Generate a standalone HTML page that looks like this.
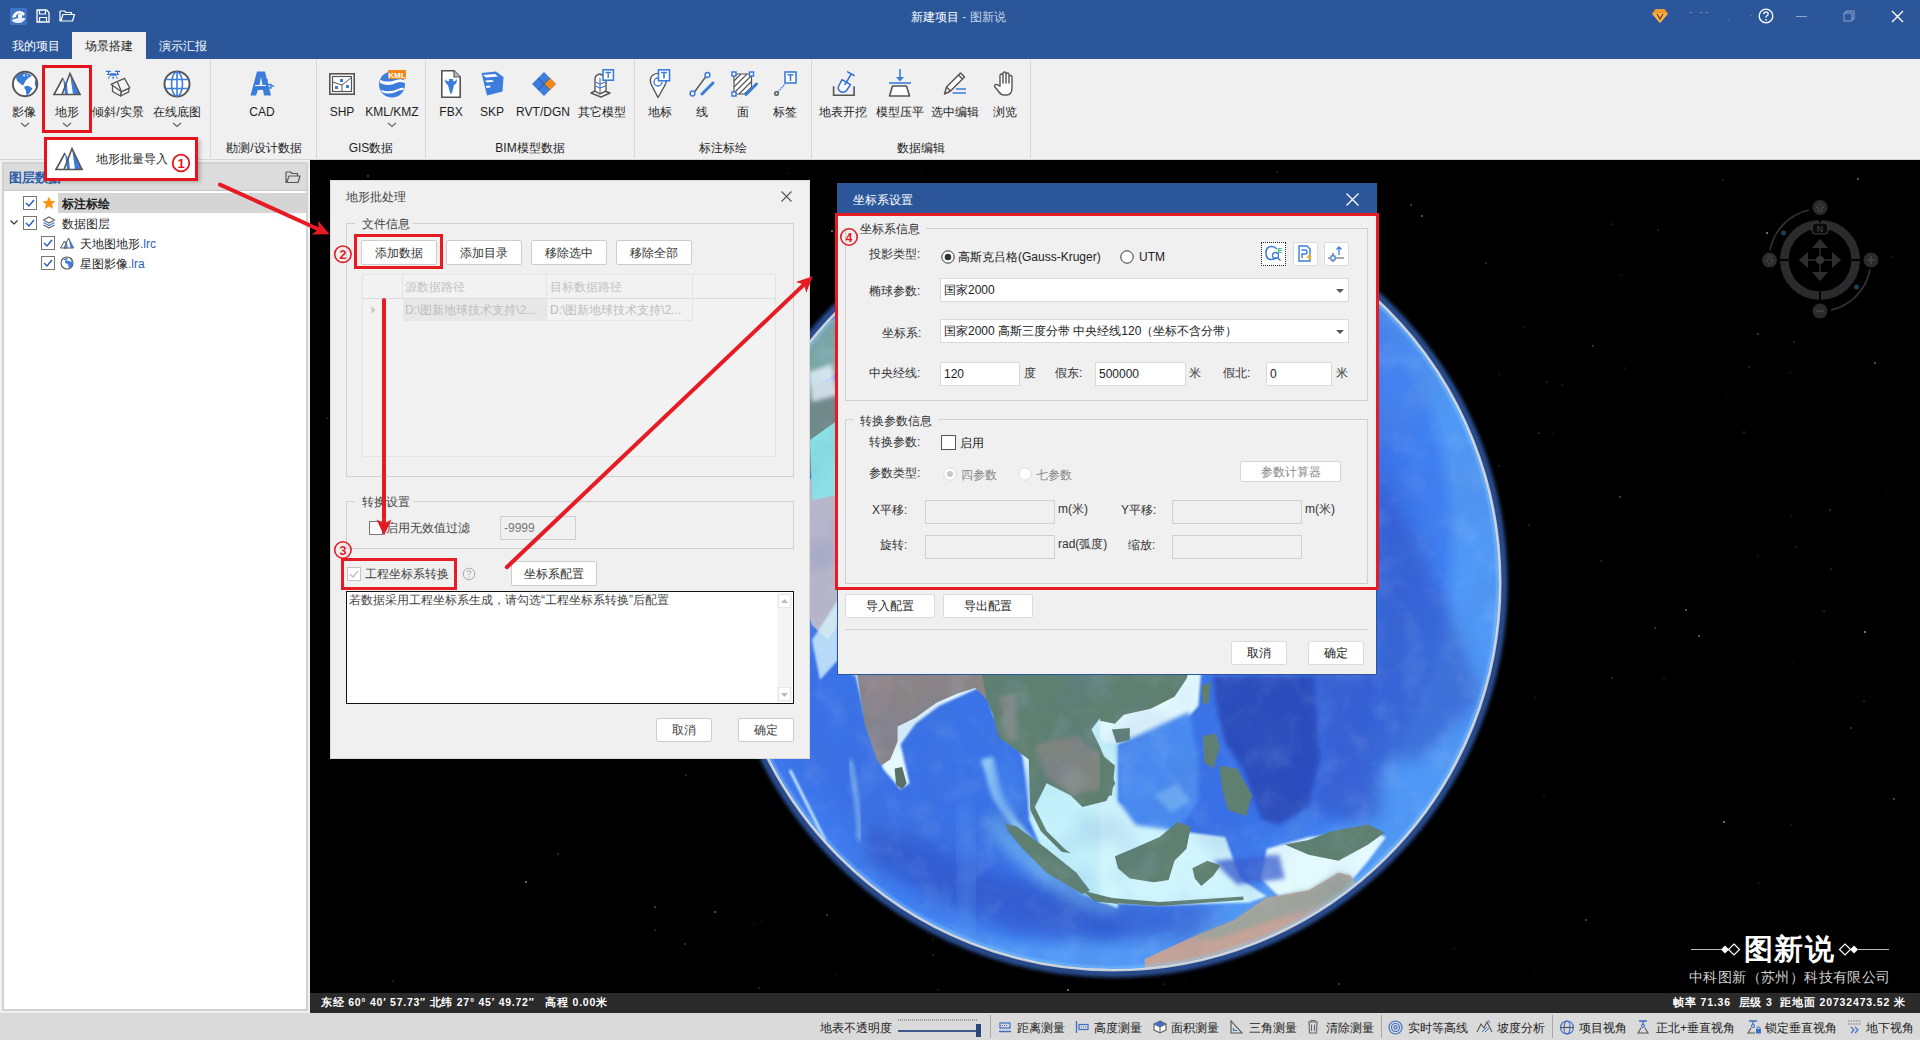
<!DOCTYPE html>
<html><head><meta charset="utf-8">
<style>
*{box-sizing:border-box}
html,body{margin:0;padding:0;width:1920px;height:1040px;overflow:hidden;background:#f0f0f0;font-family:"Liberation Sans",sans-serif;font-size:12px;color:#1e1e1e}
.a{position:absolute}
.t{position:absolute;white-space:nowrap;line-height:14px}
.c{text-align:center}
svg{position:absolute;overflow:visible}
.btn{background:#fff;border:1px solid #cdcdcd;border-radius:2px}
</style></head><body>

<!-- title bar -->
<div class="a" style="left:0;top:0;width:1920px;height:59px;background:#2b579a"></div>
<div class="t" style="left:911px;top:10px;color:#fff">新建项目 <span style="color:#c9d4e7">- 图新说</span></div>

<!-- title icons -->
<svg style="left:10px;top:8px" width="17" height="17" viewBox="0 0 17 17">
<rect x="0" y="0" width="17" height="17" rx="1.5" fill="#3f74c4"/>
<path d="M2 10 Q3 4 9 3 Q13 3 15 6 L13 8 Q12 5 9 5.5 Q6 6 6 9Z" fill="#fff"/>
<path d="M1.5 12 Q8 9 15.5 10 Q14 15 8 15 Q3 15 1.5 12Z" fill="#e8f0ff"/>
<circle cx="10" cy="8" r="2.2" fill="#fff"/>
</svg>
<svg style="left:36px;top:9px" width="14" height="14" viewBox="0 0 14 14">
<path d="M1 1 H10.5 L13 3.5 V13 H1Z" fill="none" stroke="#fff" stroke-width="1.3"/>
<path d="M3.5 1 V5 H9.5 V1 M3.5 13 V8.5 H10.5 V13" fill="none" stroke="#fff" stroke-width="1.2"/>
</svg>
<svg style="left:59px;top:9px" width="16" height="13" viewBox="0 0 16 13">
<path d="M1 2 V12 H13.5 L15.5 5.5 H4 L1.8 12 M1 2 H5.5 L7 3.5 H12.5 V5.5" fill="none" stroke="#fff" stroke-width="1.2" stroke-linejoin="round"/>
</svg>
<svg style="left:1651px;top:8px" width="18" height="16" viewBox="0 0 18 16">
<path d="M1 5.5 L4.5 1 H13.5 L17 5.5 L9 15Z" fill="#f39a2e"/>
<path d="M1 5.5 H17 L9 15Z" fill="#f7b452"/>
<path d="M6 6 L9 11 L12 6" stroke="#7a3d00" stroke-width="1.3" fill="none"/>
</svg>
<div class="a" style="left:1690px;top:12px;width:2px;height:1px;background:#7b93c0"></div>
<div class="a" style="left:1700px;top:12px;width:2px;height:1px;background:#7b93c0"></div>
<div class="a" style="left:1706px;top:12px;width:2px;height:1px;background:#7b93c0"></div>
<div class="a" style="left:1728px;top:19px;width:2px;height:1px;background:#5a78ad"></div>
<div class="a" style="left:1750px;top:15px;width:2px;height:1px;background:#5a78ad"></div>
<svg style="left:1758px;top:8px" width="16" height="16" viewBox="0 0 16 16">
<circle cx="8" cy="8" r="6.8" fill="none" stroke="#fff" stroke-width="1.3"/>
<path d="M5.8 6.2 Q5.8 3.8 8 3.8 Q10.2 3.8 10.2 6 Q10.2 7.3 8.6 8 Q8 8.4 8 9.6" fill="none" stroke="#fff" stroke-width="1.3"/>
<circle cx="8" cy="11.8" r="0.9" fill="#fff"/>
</svg>
<div class="a" style="left:1796px;top:16px;width:11px;height:1px;background:#8fa6cf"></div>
<svg style="left:1843px;top:10px" width="12" height="12" viewBox="0 0 12 12">
<path d="M3 3 V1 H11 V9 H9 M1 3 H9 V11 H1Z" fill="none" stroke="#8fa6cf" stroke-width="1"/>
</svg>
<svg style="left:1891px;top:10px" width="13" height="13" viewBox="0 0 13 13">
<path d="M1 1 L12 12 M12 1 L1 12" stroke="#fff" stroke-width="1.4"/>
</svg>

<!-- tabs -->
<div class="t" style="left:12px;top:39px;color:#fff">我的项目</div>
<div class="a" style="left:72px;top:32px;width:74px;height:28px;background:#f0f0f0"></div>
<div class="t" style="left:85px;top:39px;color:#262626">场景搭建</div>
<div class="t" style="left:159px;top:39px;color:#fff">演示汇报</div>

<!-- ribbon -->
<div class="a" style="left:0;top:159px;width:1920px;height:1px;background:#d5d5d5"></div>


<!-- ribbon icons -->
<!-- 影像 globe -->
<svg style="left:11px;top:70px" width="28" height="28" viewBox="0 0 28 28">
<circle cx="14.1" cy="14" r="12.2" fill="#fff"/>
<path d="M5 7.2 Q7 4 9.9 2.9 Q16 2 21 5.4 L16.7 8.8 L14.2 10.9 L13.6 12.8 L12.4 15.2 L9.9 14.3 L6.2 10.9Z" fill="#3a7ad8"/>
<path d="M11.5 5.2 L14 4.2 L13.5 6.8Z M15.5 4.8 L17 5.2 L16.5 7Z" fill="#fff"/>
<path d="M13.6 16.2 L17 15.8 L21.6 18.3 L18.5 23.2 L15.5 25.5 L14.8 20.2 L13.3 18Z" fill="#3a7ad8"/>
<path d="M24 10.3 L26 11 L26.2 17 L24.5 16.5 L23.8 13.5Z" fill="#3a7ad8"/>
<circle cx="14.1" cy="14" r="12.2" fill="none" stroke="#555" stroke-width="1.9"/>
</svg>
<!-- 地形 mountains -->
<svg style="left:53px;top:72px" width="29" height="24" viewBox="0 0 29 24">
<path d="M1 22.5 L10 6 L16 16 L16 22.5Z" fill="#fff"/>
<path d="M9 22.5 L17 1.5 L27 22.5Z" fill="#fff"/>
<path d="M10 6 L14 13 L15 22.5 L12 22.5Z" fill="#3c7ddc"/>
<path d="M17 1.5 L27 22.5 L20 22.5Z" fill="#3c7ddc"/>
<path d="M1 22.5 L10 6 M9 22.5 L17 1.5 L27 22.5 M0 22.5 H28" fill="none" stroke="#555" stroke-width="1.6"/>
</svg>
<!-- 倾斜 drone+house -->
<svg style="left:104px;top:70px" width="28" height="28" viewBox="0 0 28 28">
<path d="M1.9 1.4 H6.8 M11 1.4 H16 M4.5 1.4 V4.5 M13.6 1.4 V4.5 M3 4.5 H15" stroke="#2f6fd6" stroke-width="1.2" fill="none"/>
<rect x="6.2" y="3.3" width="5.8" height="2.4" fill="#2f6fd6"/>
<rect x="8.3" y="6.8" width="1.6" height="1.8" fill="#2f6fd6"/>
<path d="M4.4 8.7 Q4.8 6.5 6.4 5.8 M13.4 8.7 Q13 6.5 11.5 5.8" stroke="#2f6fd6" stroke-width="1" fill="none"/>
<path d="M8.5 15.5 L13.5 13.2 L17.5 21 L16.6 26 L8.5 21.5Z" fill="#f4f4f4" stroke="#555" stroke-width="1.3" stroke-linejoin="round"/>
<path d="M17.5 21.5 L24.8 18.5 V21.8 L16.6 26Z" fill="#f4f4f4" stroke="#555" stroke-width="1.3" stroke-linejoin="round"/>
<path d="M7 14.3 L20.5 8.4 L25.8 17.9 L17.5 21.7Z" fill="#f4f4f4" stroke="#555" stroke-width="1.3" stroke-linejoin="round"/>
<path d="M13.5 12.2 L17.5 21.7" stroke="#555" stroke-width="1.3"/>
</svg>
<!-- 在线底图 grid globe -->
<svg style="left:163px;top:70px" width="28" height="28" viewBox="0 0 28 28">
<circle cx="14" cy="14" r="12.5" fill="#fff" stroke="#555" stroke-width="2"/>
<ellipse cx="14" cy="14" rx="5.5" ry="12" fill="none" stroke="#3c7ddc" stroke-width="1.6"/>
<path d="M14 2 V26 M2.5 9.5 H25.5 M2.5 18.5 H25.5" stroke="#3c7ddc" stroke-width="1.6"/>
</svg>
<!-- CAD -->
<svg style="left:250px;top:71px" width="26" height="26" viewBox="0 0 26 26">
<path d="M7 0.5 H15 L21 24.5 H14 L13 19 H8 L6 24.5 H0.5 Z M9.5 14 H12.5 L11 6 Z" fill="#3c7ddc" fill-rule="evenodd"/>
<path d="M3.5 15 H18 M17 8 V18 M15 13.5 H21 V17 H15Z M21 15 H24" stroke="#3c7ddc" stroke-width="1.4" fill="none"/>
<path d="M5 14.5 H16" stroke="#fff" stroke-width="1" />
</svg>
<!-- SHP -->
<svg style="left:329px;top:73px" width="26" height="22" viewBox="0 0 26 22">
<rect x="0.8" y="0.8" width="24.4" height="20.4" fill="#fff" stroke="#555" stroke-width="1.6"/>
<rect x="3.5" y="3.5" width="19" height="15" fill="#fff" stroke="#555" stroke-width="1.2"/>
<path d="M3.5 9 L13 12 L22.5 4.5 M13 12 V18.5" stroke="#555" stroke-width="1" fill="none"/>
<rect x="11" y="6" width="3" height="3" fill="#3c7ddc"/><rect x="6" y="13" width="3" height="3" fill="#3c7ddc"/><rect x="17" y="12" width="3" height="3" fill="#3c7ddc"/>
</svg>
<!-- KML -->
<svg style="left:378px;top:69px" width="30" height="30" viewBox="0 0 30 30">
<circle cx="14" cy="15.5" r="13" fill="#3c7ddc"/>
<path d="M2 11 Q10 14 18 11 Q24 9 27 12 L27 14 Q22 12 18 14 Q10 18 2 14Z M3 21 Q12 24 20 20 Q24 18 26 19 L25 21 Q21 21 18 23 Q10 26 4 23Z M16 6 Q22 8 26 6 L26 8 Q21 10 16 8Z" fill="#fff"/>
<rect x="10" y="1" width="18" height="9" fill="#f08a1e"/>
<text x="19" y="8.6" font-size="8" font-weight="bold" fill="#fff" text-anchor="middle" font-family="Liberation Sans">KML</text>
</svg>
<!-- FBX -->
<svg style="left:441px;top:70px" width="20" height="28" viewBox="0 0 20 28">
<path d="M0.8 0.8 H13 L19.2 7 V27.2 H0.8 Z" fill="#fff" stroke="#555" stroke-width="1.6"/>
<path d="M13 0.8 V7 H19.2" fill="#bbb" stroke="#555" stroke-width="1.2"/>
<path d="M4 9 Q6 12 8 11 L8 9 H12 L12 11 Q14 12 16 9 Q16 14 13 15 L12 19 L11 23 L10 24 L9 23 L8 19 L7 15 Q4 14 4 9Z" fill="#3c7ddc"/>
</svg>
<!-- SKP -->
<svg style="left:481px;top:71px" width="24" height="26" viewBox="0 0 24 26">
<path d="M0.5 2 L15 0.5 L22.5 6 L21.5 20.5 L6 24.5 Z" fill="#3c7ddc"/>
<path d="M2 4 L14 3 L17 5.5 L5 6.5Z M4 9.5 L11 9 L13 10.5 L6 11.5Z M5 15 L9 14.5 L9.5 16.5 L5.5 17Z" fill="#fff"/>
</svg>
<!-- RVT -->
<svg style="left:531px;top:71px" width="26" height="26" viewBox="0 0 26 26">
<path d="M13 1 L25 13 L13 25 L1 13Z" fill="#3c7ddc"/>
<path d="M19 7 L25 13 L19 19 L13 13Z" fill="#f08a1e"/>
<path d="M7 7 L19 19 M19 7 L7 19" stroke="#2a4f8a" stroke-width="0.8"/>
</svg>
<!-- other model -->
<svg style="left:590px;top:69px" width="24" height="30" viewBox="0 0 24 30">
<path d="M1 24 L9 20 L20 24 L11 28Z" fill="#fff" stroke="#555" stroke-width="1.4" stroke-linejoin="round"/>
<path d="M5 10 Q5 6 10 5 L16 8 L16 22 L10 25 L5 22Z" fill="#fff" stroke="#555" stroke-width="1.4"/>
<path d="M10 9 V25" stroke="#555" stroke-width="1"/>
<path d="M5.5 13 L10 15 L15.5 13 M5.5 17 L10 19 L15.5 17" stroke="#3c7ddc" stroke-width="1.2" fill="none"/>
<rect x="13" y="0.8" width="10.4" height="10.4" fill="#fff" stroke="#3c7ddc" stroke-width="1.6"/>
<path d="M15.5 3.5 H21 M18.2 3.5 V9" stroke="#3c7ddc" stroke-width="1.4"/>
</svg>
<!-- 地标 -->
<svg style="left:649px;top:69px" width="24" height="30" viewBox="0 0 24 30">
<path d="M9 28.5 L2 15 Q0 9 4 6 Q7 4 10 4.5 Q16 5 17 11 Q17.5 14 15.5 17Z" fill="#fff" stroke="#555" stroke-width="1.4" stroke-linejoin="round"/>
<path d="M9 9 A4 4 0 1 0 13 13" stroke="#3c7ddc" stroke-width="1.4" fill="none"/>
<rect x="9.5" y="0.8" width="11" height="11" fill="#fff" stroke="#3c7ddc" stroke-width="1.6"/>
<path d="M12 3.5 H18 M15 3.5 V9.5" stroke="#3c7ddc" stroke-width="1.6"/>
</svg>
<!-- 线 -->
<svg style="left:689px;top:71px" width="28" height="26" viewBox="0 0 28 26">
<path d="M4 23 L18 4" stroke="#555" stroke-width="1.4"/>
<circle cx="3.5" cy="22.5" r="2.4" fill="#fff" stroke="#3c7ddc" stroke-width="1.5"/>
<circle cx="18.5" cy="4" r="2.4" fill="#fff" stroke="#3c7ddc" stroke-width="1.5"/>
<path d="M13 23 L24 12" stroke="#3c7ddc" stroke-width="3" stroke-linecap="round"/>
</svg>
<!-- 面 -->
<svg style="left:731px;top:71px" width="28" height="26" viewBox="0 0 28 26">
<path d="M3 3 H20.5 V18 L13 23 H3Z" fill="#fff" stroke="#555" stroke-width="1.2"/>
<path d="M3 10 L10 3 M3 16 L16 3 M3 22 L20.5 4.5 M8 23 L20.5 10.5 M14 23 L20.5 16" stroke="#555" stroke-width="1.2"/>
<rect x="1" y="1" width="4" height="4" fill="#fff" stroke="#3c7ddc" stroke-width="1.5"/>
<rect x="18.5" y="1" width="4" height="4" fill="#fff" stroke="#3c7ddc" stroke-width="1.5"/>
<rect x="1" y="21" width="4" height="4" fill="#fff" stroke="#3c7ddc" stroke-width="1.5"/>
<path d="M15 23.5 L25.5 13" stroke="#3c7ddc" stroke-width="3" stroke-linecap="round"/>
</svg>
<!-- 标签 -->
<svg style="left:773px;top:71px" width="26" height="26" viewBox="0 0 26 26">
<circle cx="3.5" cy="22.5" r="1.8" fill="none" stroke="#555" stroke-width="1.4"/>
<path d="M5 21 L12 13" stroke="#3c7ddc" stroke-width="1.4" stroke-dasharray="1.5 1"/>
<rect x="12" y="1" width="11" height="11" fill="#fff" stroke="#3c7ddc" stroke-width="1.6"/>
<path d="M14.5 3.8 H20.5 M17.5 3.8 V10" stroke="#3c7ddc" stroke-width="1.6"/>
</svg>
<!-- 地表开挖 -->
<svg style="left:832px;top:69px" width="24" height="30" viewBox="0 0 24 30">
<path d="M1.6 17.3 V26.3 H22.1 V17.3" stroke="#555" stroke-width="1.6" fill="none"/>
<path d="M10 10.7 L18.5 15.6 L14.5 21.5 Q12 24 9 22.8 Q5.5 21 6.5 17.5Z" fill="#fff" stroke="#2f6fd6" stroke-width="1.5" stroke-linejoin="round"/>
<path d="M13 15.5 L19.2 5.2 M15.6 2.9 L22.1 6.5" stroke="#2f6fd6" stroke-width="1.5" stroke-linecap="round"/>
</svg>
<!-- 模型压平 -->
<svg style="left:888px;top:69px" width="24" height="30" viewBox="0 0 24 30">
<path d="M12 0 V10" stroke="#3c7ddc" stroke-width="1.6"/>
<path d="M8 8 L16 8 L12 12.5Z" fill="#3c7ddc"/>
<path d="M1 14 H23" stroke="#3c7ddc" stroke-width="1.6"/>
<path d="M4.5 17 H18.5 L21.5 27 H1.5Z" fill="#fff" stroke="#555" stroke-width="1.6" stroke-linejoin="round"/>
</svg>
<!-- 选中编辑 -->
<svg style="left:943px;top:71px" width="26" height="26" viewBox="0 0 26 26">
<path d="M1.5 23 L3.5 16 L17.5 2 L21.5 6 L7.5 20 Z M15.5 4 L19.5 8 M3.5 16 L7.5 20" fill="#fff" stroke="#555" stroke-width="1.5" stroke-linejoin="round"/>
<path d="M13 18 H23 M9.5 22 H23" stroke="#3c7ddc" stroke-width="1.4"/>
</svg>
<!-- 浏览 hand -->
<svg style="left:993px;top:71px" width="24" height="26" viewBox="0 0 24 26">
<path d="M7 15 V5 Q7 3 8.5 3 Q10 3 10 5 V12 V3 Q10 1 11.5 1 Q13 1 13 3 V12 V3.5 Q13 2 14.5 2 Q16 2 16 3.5 V12 V6 Q16 4.5 17.5 4.5 Q19 4.5 19 6 V17 Q19 24 13 24 H11 Q8 24 6 21 L2 16 Q1 14.5 2.5 13.5 Q4 13 5.5 14.5 Z" fill="#fff" stroke="#555" stroke-width="1.4" stroke-linejoin="round"/>
</svg>

<!-- ribbon labels -->
<div class="t c" style="left:4px;top:105px;width:40px">影像</div>
<div class="t c" style="left:47px;top:105px;width:40px">地形</div>
<div class="t c" style="left:88px;top:105px;width:60px">倾斜/实景</div>
<div class="t c" style="left:147px;top:105px;width:60px">在线底图</div>
<div class="t c" style="left:232px;top:105px;width:60px">CAD</div>
<div class="t c" style="left:317px;top:105px;width:50px">SHP</div>
<div class="t c" style="left:362px;top:105px;width:60px">KML/KMZ</div>
<div class="t c" style="left:426px;top:105px;width:50px">FBX</div>
<div class="t c" style="left:467px;top:105px;width:50px">SKP</div>
<div class="t c" style="left:513px;top:105px;width:60px">RVT/DGN</div>
<div class="t c" style="left:572px;top:105px;width:60px">其它模型</div>
<div class="t c" style="left:635px;top:105px;width:50px">地标</div>
<div class="t c" style="left:677px;top:105px;width:50px">线</div>
<div class="t c" style="left:718px;top:105px;width:50px">面</div>
<div class="t c" style="left:760px;top:105px;width:50px">标签</div>
<div class="t c" style="left:813px;top:105px;width:60px">地表开挖</div>
<div class="t c" style="left:870px;top:105px;width:60px">模型压平</div>
<div class="t c" style="left:925px;top:105px;width:60px">选中编辑</div>
<div class="t c" style="left:980px;top:105px;width:50px">浏览</div>
<!-- chevrons -->
<svg style="left:20px;top:122px" width="10" height="6"><path d="M1 1 L5 4.5 L9 1" stroke="#666" stroke-width="1.3" fill="none"/></svg>
<svg style="left:62px;top:122px" width="10" height="6"><path d="M1 1 L5 4.5 L9 1" stroke="#666" stroke-width="1.3" fill="none"/></svg>
<svg style="left:172px;top:122px" width="10" height="6"><path d="M1 1 L5 4.5 L9 1" stroke="#666" stroke-width="1.3" fill="none"/></svg>
<svg style="left:387px;top:122px" width="10" height="6"><path d="M1 1 L5 4.5 L9 1" stroke="#666" stroke-width="1.3" fill="none"/></svg>
<!-- group labels -->
<div class="t c" style="left:212px;top:141px;width:104px">勘测/设计数据</div>
<div class="t c" style="left:317px;top:141px;width:108px">GIS数据</div>
<div class="t c" style="left:426px;top:141px;width:208px">BIM模型数据</div>
<div class="t c" style="left:635px;top:141px;width:176px">标注标绘</div>
<div class="t c" style="left:812px;top:141px;width:218px">数据编辑</div>
<!-- separators -->
<div class="a" style="left:210px;top:60px;width:1px;height:98px;background:#d6d6d6"></div>
<div class="a" style="left:316px;top:60px;width:1px;height:98px;background:#d6d6d6"></div>
<div class="a" style="left:425px;top:60px;width:1px;height:98px;background:#d6d6d6"></div>
<div class="a" style="left:634px;top:60px;width:1px;height:98px;background:#d6d6d6"></div>
<div class="a" style="left:811px;top:60px;width:1px;height:98px;background:#d6d6d6"></div>
<div class="a" style="left:1030px;top:60px;width:1px;height:98px;background:#d6d6d6"></div>

<!-- left panel -->
<div class="a" style="left:2px;top:162px;width:306px;height:849px;background:#fff;border:2px solid #d2d2d2"></div>
<div class="a" style="left:4px;top:164px;width:302px;height:27px;background:#dcdcdc;border-bottom:1px solid #c8c8c8"></div>


<div class="t" style="left:9px;top:170px;font-size:13px;font-weight:bold;color:#2e5ea8;line-height:16px">图层数据</div>
<svg style="left:285px;top:170px" width="16" height="14" viewBox="0 0 16 14">
<path d="M1 2 V12.5 H13 L15 6 H4 L1.8 12.5 M1 2 H5.5 L7 3.5 H12.5 V6" fill="none" stroke="#555" stroke-width="1.2" stroke-linejoin="round"/>
</svg>
<div class="a" style="left:58px;top:193px;width:248px;height:20px;background:#d5d5d5"></div>
<!-- checkboxes -->
<svg style="left:23px;top:196px" width="14" height="14"><rect x="0.5" y="0.5" width="13" height="13" fill="#fff" stroke="#767676"/><path d="M3 7 L6 10 L11 4" stroke="#2b5fb4" stroke-width="1.5" fill="none"/></svg>
<svg style="left:23px;top:216px" width="14" height="14"><rect x="0.5" y="0.5" width="13" height="13" fill="#fff" stroke="#767676"/><path d="M3 7 L6 10 L11 4" stroke="#2b5fb4" stroke-width="1.5" fill="none"/></svg>
<svg style="left:41px;top:236px" width="14" height="14"><rect x="0.5" y="0.5" width="13" height="13" fill="#fff" stroke="#767676"/><path d="M3 7 L6 10 L11 4" stroke="#2b5fb4" stroke-width="1.5" fill="none"/></svg>
<svg style="left:41px;top:256px" width="14" height="14"><rect x="0.5" y="0.5" width="13" height="13" fill="#fff" stroke="#767676"/><path d="M3 7 L6 10 L11 4" stroke="#2b5fb4" stroke-width="1.5" fill="none"/></svg>
<svg style="left:10px;top:220px" width="8" height="6"><path d="M0.5 0.5 L4 4 L7.5 0.5" stroke="#333" stroke-width="1.2" fill="none"/></svg>
<!-- star -->
<svg style="left:42px;top:196px" width="14" height="14" viewBox="0 0 14 14"><path d="M7 0.5 L8.9 5 L13.5 5.2 L10 8.3 L11.2 13 L7 10.4 L2.8 13 L4 8.3 L0.5 5.2 L5.1 5Z" fill="#ff9412"/></svg>
<!-- layers -->
<svg style="left:42px;top:216px" width="14" height="14" viewBox="0 0 14 14"><path d="M7 1 L12.5 4 L7 7 L1.5 4Z" fill="none" stroke="#666" stroke-width="1.1"/><path d="M1.5 6.5 L7 9.5 L12.5 6.5" fill="none" stroke="#3c7ddc" stroke-width="1.1"/><path d="M1.5 9 L7 12 L12.5 9" fill="none" stroke="#666" stroke-width="1.1"/></svg>
<!-- mountain small -->
<svg style="left:60px;top:237px" width="14" height="12" viewBox="0 0 14 12"><path d="M0.5 11 L4.5 4 L7 8 L7 11Z M4 11 L8.5 1 L13.5 11Z" fill="#fff" stroke="#555" stroke-width="1"/><path d="M4.5 4 L6.5 8 L6.5 11 L5.5 11Z M8.5 1 L13.5 11 L10.5 11Z" fill="#3c7ddc"/></svg>
<!-- globe small -->
<svg style="left:60px;top:256px" width="14" height="14" viewBox="0 0 14 14"><circle cx="7" cy="7" r="6" fill="#fff" stroke="#555" stroke-width="1.1"/><path d="M3 3.5 Q6 1.5 8 2 L7 4 L5 5 L5 7 L8 8 L8.5 11 L10 12 Q12.5 10 12.5 7 L11 4.5 L9.5 2.5 Q12 4 12.5 6" fill="#3c7ddc"/></svg>
<div class="t" style="left:62px;top:197px;font-weight:bold">标注标绘</div>
<div class="t" style="left:62px;top:217px">数据图层</div>
<div class="t" style="left:80px;top:237px">天地图地形<span style="color:#2b5fb4">.lrc</span></div>
<div class="t" style="left:80px;top:257px">星图影像<span style="color:#2b5fb4">.lra</span></div>

<!-- viewport -->
<div class="a" style="left:310px;top:160px;width:1610px;height:833px;background:#000"></div>
<div class="a" style="left:310px;top:993px;width:1610px;height:20px;background:#2a2a2a"></div>
<div class="a" style="left:0;top:1013px;width:1920px;height:27px;background:#dadada"></div>

<!-- globe --><svg style="left:0;top:0" width="1920" height="1040" viewBox="0 0 1920 1040">
<defs>
<clipPath id="gc"><circle cx="1113" cy="583" r="387"/></clipPath>
<clipPath id="vpc"><rect x="310" y="160" width="1610" height="833"/></clipPath>
<radialGradient id="ocean" cx="1053" cy="543" r="407" gradientUnits="userSpaceOnUse">
<stop offset="0" stop-color="#3a78ea"/><stop offset="0.8" stop-color="#3a70e6"/><stop offset="0.96" stop-color="#4080f2"/><stop offset="1" stop-color="#5098f6"/>
</radialGradient>
<radialGradient id="glow" cx="1113" cy="583" r="397" gradientUnits="userSpaceOnUse">
<stop offset="0.97" stop-color="#3a6cd0" stop-opacity="1"/><stop offset="1" stop-color="#000" stop-opacity="0"/>
</radialGradient>
<filter id="tex" x="0" y="0" width="100%" height="100%"><feTurbulence type="fractalNoise" baseFrequency="0.035" numOctaves="3" seed="4" result="n"/><feColorMatrix type="matrix" values="0 0 0 0 0.55  0 0 0 0 0.75  0 0 0 0 1  1.6 0 0 0 -0.75" /></filter>
<filter id="tex2" x="0" y="0" width="100%" height="100%"><feTurbulence type="fractalNoise" baseFrequency="0.02" numOctaves="2" seed="9"/><feColorMatrix type="matrix" values="0 0 0 0 0.1  0 0 0 0 0.2  0 0 0 0 0.55  -1.6 0 0 0 0.9" /></filter>
<filter id="bl" x="-5%" y="-5%" width="110%" height="110%"><feGaussianBlur stdDeviation="1"/></filter>
<filter id="bl2" x="-10%" y="-10%" width="120%" height="120%"><feGaussianBlur stdDeviation="2"/></filter>
<filter id="bl4" x="-30%" y="-30%" width="160%" height="160%"><feGaussianBlur stdDeviation="8"/></filter>
</defs>
<g clip-path="url(#vpc)">
<circle cx="1796" cy="547" r="0.6" fill="#e0e0e0" opacity="0.48"/><circle cx="609" cy="585" r="0.6" fill="#e0e0e0" opacity="0.55"/><circle cx="463" cy="413" r="0.5" fill="#e0e0e0" opacity="0.25"/><circle cx="1648" cy="213" r="0.6" fill="#e0e0e0" opacity="0.22"/><circle cx="626" cy="355" r="0.5" fill="#e0e0e0" opacity="0.36"/><circle cx="759" cy="988" r="0.5" fill="#e0e0e0" opacity="0.75"/><circle cx="681" cy="401" r="0.5" fill="#e0e0e0" opacity="0.24"/><circle cx="933" cy="955" r="0.5" fill="#e0e0e0" opacity="0.67"/><circle cx="655" cy="930" r="0.9" fill="#e0e0e0" opacity="0.23"/><circle cx="1886" cy="490" r="0.6" fill="#e0e0e0" opacity="0.24"/><circle cx="1562" cy="385" r="0.7" fill="#e0e0e0" opacity="0.25"/><circle cx="336" cy="501" r="0.6" fill="#e0e0e0" opacity="0.71"/><circle cx="708" cy="245" r="0.9" fill="#e0e0e0" opacity="0.23"/><circle cx="597" cy="625" r="0.6" fill="#e0e0e0" opacity="0.45"/><circle cx="1894" cy="799" r="0.9" fill="#e0e0e0" opacity="0.43"/><circle cx="499" cy="510" r="0.7" fill="#e0e0e0" opacity="0.32"/><circle cx="1700" cy="969" r="0.5" fill="#e0e0e0" opacity="0.53"/><circle cx="650" cy="488" r="0.5" fill="#e0e0e0" opacity="0.67"/><circle cx="380" cy="282" r="0.5" fill="#e0e0e0" opacity="0.44"/><circle cx="1553" cy="434" r="0.5" fill="#e0e0e0" opacity="0.36"/><circle cx="431" cy="334" r="0.5" fill="#e0e0e0" opacity="0.55"/><circle cx="1704" cy="313" r="0.6" fill="#e0e0e0" opacity="0.28"/><circle cx="1625" cy="368" r="0.6" fill="#e0e0e0" opacity="0.30"/><circle cx="388" cy="251" r="0.7" fill="#e0e0e0" opacity="0.48"/><circle cx="695" cy="745" r="0.9" fill="#e0e0e0" opacity="0.34"/><circle cx="783" cy="306" r="0.5" fill="#e0e0e0" opacity="0.60"/><circle cx="515" cy="558" r="0.5" fill="#e0e0e0" opacity="0.56"/><circle cx="762" cy="921" r="0.5" fill="#e0e0e0" opacity="0.31"/><circle cx="423" cy="502" r="0.5" fill="#e0e0e0" opacity="0.34"/><circle cx="595" cy="467" r="0.6" fill="#e0e0e0" opacity="0.51"/><circle cx="460" cy="276" r="0.7" fill="#e0e0e0" opacity="0.45"/><circle cx="368" cy="176" r="0.7" fill="#e0e0e0" opacity="0.70"/><circle cx="1858" cy="179" r="0.9" fill="#e0e0e0" opacity="0.55"/><circle cx="420" cy="419" r="0.5" fill="#e0e0e0" opacity="0.28"/><circle cx="433" cy="614" r="0.6" fill="#e0e0e0" opacity="0.61"/><circle cx="1586" cy="920" r="0.9" fill="#e0e0e0" opacity="0.39"/><circle cx="1759" cy="883" r="0.5" fill="#e0e0e0" opacity="0.43"/><circle cx="1699" cy="636" r="0.9" fill="#e0e0e0" opacity="0.54"/><circle cx="921" cy="171" r="0.5" fill="#e0e0e0" opacity="0.24"/><circle cx="1339" cy="984" r="0.7" fill="#e0e0e0" opacity="0.68"/><circle cx="1658" cy="230" r="0.5" fill="#e0e0e0" opacity="0.61"/><circle cx="810" cy="234" r="0.5" fill="#e0e0e0" opacity="0.21"/><circle cx="1790" cy="373" r="0.7" fill="#e0e0e0" opacity="0.21"/><circle cx="542" cy="668" r="0.7" fill="#e0e0e0" opacity="0.49"/><circle cx="1744" cy="432" r="0.6" fill="#e0e0e0" opacity="0.57"/><circle cx="1524" cy="327" r="0.6" fill="#e0e0e0" opacity="0.32"/><circle cx="531" cy="573" r="0.5" fill="#e0e0e0" opacity="0.66"/><circle cx="1454" cy="949" r="0.6" fill="#e0e0e0" opacity="0.35"/><circle cx="493" cy="552" r="0.9" fill="#e0e0e0" opacity="0.71"/><circle cx="1664" cy="679" r="0.5" fill="#e0e0e0" opacity="0.38"/><circle cx="1547" cy="382" r="0.5" fill="#e0e0e0" opacity="0.63"/><circle cx="1892" cy="257" r="0.7" fill="#e0e0e0" opacity="0.26"/><circle cx="1851" cy="728" r="0.9" fill="#e0e0e0" opacity="0.31"/><circle cx="723" cy="753" r="0.5" fill="#e0e0e0" opacity="0.62"/><circle cx="600" cy="387" r="0.6" fill="#e0e0e0" opacity="0.39"/><circle cx="1767" cy="233" r="0.9" fill="#e0e0e0" opacity="0.71"/><circle cx="521" cy="537" r="0.5" fill="#e0e0e0" opacity="0.54"/><circle cx="1724" cy="822" r="0.9" fill="#e0e0e0" opacity="0.72"/><circle cx="836" cy="975" r="0.5" fill="#e0e0e0" opacity="0.25"/><circle cx="655" cy="907" r="0.7" fill="#e0e0e0" opacity="0.74"/><circle cx="827" cy="915" r="0.7" fill="#e0e0e0" opacity="0.67"/><circle cx="754" cy="923" r="0.5" fill="#e0e0e0" opacity="0.32"/><circle cx="1001" cy="190" r="0.6" fill="#e0e0e0" opacity="0.49"/><circle cx="1068" cy="990" r="0.9" fill="#e0e0e0" opacity="0.70"/><circle cx="1831" cy="569" r="0.5" fill="#e0e0e0" opacity="0.72"/><circle cx="1529" cy="525" r="0.6" fill="#e0e0e0" opacity="0.51"/><circle cx="1758" cy="334" r="0.7" fill="#e0e0e0" opacity="0.67"/><circle cx="1284" cy="184" r="0.9" fill="#e0e0e0" opacity="0.73"/><circle cx="1186" cy="981" r="0.5" fill="#e0e0e0" opacity="0.27"/><circle cx="1422" cy="216" r="0.9" fill="#e0e0e0" opacity="0.50"/><circle cx="1791" cy="825" r="0.6" fill="#e0e0e0" opacity="0.42"/><circle cx="1758" cy="556" r="0.6" fill="#e0e0e0" opacity="0.37"/><circle cx="986" cy="185" r="0.5" fill="#e0e0e0" opacity="0.34"/><circle cx="369" cy="290" r="0.7" fill="#e0e0e0" opacity="0.21"/><circle cx="1486" cy="263" r="0.7" fill="#e0e0e0" opacity="0.48"/><circle cx="1723" cy="180" r="0.6" fill="#e0e0e0" opacity="0.55"/><circle cx="659" cy="611" r="0.6" fill="#e0e0e0" opacity="0.52"/><circle cx="686" cy="775" r="0.6" fill="#e0e0e0" opacity="0.65"/><circle cx="1794" cy="342" r="0.5" fill="#e0e0e0" opacity="0.75"/><circle cx="527" cy="359" r="0.7" fill="#e0e0e0" opacity="0.60"/><circle cx="1824" cy="611" r="0.6" fill="#e0e0e0" opacity="0.59"/><circle cx="341" cy="328" r="0.7" fill="#e0e0e0" opacity="0.58"/><circle cx="497" cy="580" r="0.6" fill="#e0e0e0" opacity="0.62"/><circle cx="1601" cy="561" r="0.9" fill="#e0e0e0" opacity="0.21"/><circle cx="547" cy="314" r="0.6" fill="#e0e0e0" opacity="0.31"/><circle cx="1902" cy="929" r="0.5" fill="#e0e0e0" opacity="0.25"/><circle cx="528" cy="726" r="0.5" fill="#e0e0e0" opacity="0.24"/><circle cx="1277" cy="172" r="0.6" fill="#e0e0e0" opacity="0.59"/><circle cx="603" cy="537" r="0.9" fill="#e0e0e0" opacity="0.61"/><circle cx="1793" cy="662" r="0.5" fill="#e0e0e0" opacity="0.25"/><circle cx="832" cy="231" r="0.9" fill="#e0e0e0" opacity="0.66"/><circle cx="1536" cy="393" r="0.6" fill="#e0e0e0" opacity="0.26"/><circle cx="1620" cy="497" r="0.7" fill="#e0e0e0" opacity="0.69"/><circle cx="1544" cy="795" r="0.6" fill="#e0e0e0" opacity="0.42"/><circle cx="425" cy="444" r="0.5" fill="#e0e0e0" opacity="0.46"/><circle cx="1738" cy="982" r="0.5" fill="#e0e0e0" opacity="0.70"/><circle cx="685" cy="944" r="0.7" fill="#e0e0e0" opacity="0.57"/><circle cx="659" cy="498" r="0.5" fill="#e0e0e0" opacity="0.30"/><circle cx="938" cy="990" r="0.5" fill="#e0e0e0" opacity="0.55"/><circle cx="1535" cy="973" r="0.5" fill="#e0e0e0" opacity="0.21"/><circle cx="1499" cy="374" r="0.5" fill="#e0e0e0" opacity="0.42"/><circle cx="1535" cy="698" r="0.7" fill="#e0e0e0" opacity="0.21"/><circle cx="715" cy="912" r="0.9" fill="#e0e0e0" opacity="0.50"/><circle cx="1865" cy="632" r="0.9" fill="#e0e0e0" opacity="0.75"/><circle cx="1612" cy="224" r="0.5" fill="#e0e0e0" opacity="0.53"/><circle cx="933" cy="939" r="0.6" fill="#e0e0e0" opacity="0.41"/><circle cx="1686" cy="610" r="0.9" fill="#e0e0e0" opacity="0.53"/><circle cx="1830" cy="510" r="0.7" fill="#e0e0e0" opacity="0.49"/><circle cx="787" cy="173" r="0.5" fill="#e0e0e0" opacity="0.33"/><circle cx="1411" cy="205" r="0.9" fill="#e0e0e0" opacity="0.37"/><circle cx="393" cy="981" r="0.5" fill="#e0e0e0" opacity="0.72"/><circle cx="1593" cy="346" r="0.7" fill="#e0e0e0" opacity="0.60"/><circle cx="1875" cy="363" r="0.9" fill="#e0e0e0" opacity="0.49"/><circle cx="544" cy="957" r="0.5" fill="#e0e0e0" opacity="0.33"/><circle cx="393" cy="507" r="0.5" fill="#e0e0e0" opacity="0.26"/><circle cx="1621" cy="275" r="0.6" fill="#e0e0e0" opacity="0.36"/><circle cx="695" cy="255" r="0.7" fill="#e0e0e0" opacity="0.69"/><circle cx="617" cy="392" r="0.6" fill="#e0e0e0" opacity="0.33"/><circle cx="627" cy="727" r="0.5" fill="#e0e0e0" opacity="0.55"/><circle cx="451" cy="722" r="0.7" fill="#e0e0e0" opacity="0.50"/><circle cx="526" cy="882" r="0.9" fill="#e0e0e0" opacity="0.64"/><circle cx="1612" cy="678" r="0.6" fill="#e0e0e0" opacity="0.62"/><circle cx="558" cy="854" r="0.7" fill="#e0e0e0" opacity="0.53"/><circle cx="1791" cy="516" r="0.5" fill="#e0e0e0" opacity="0.40"/><circle cx="327" cy="418" r="0.5" fill="#e0e0e0" opacity="0.70"/><circle cx="1539" cy="433" r="0.6" fill="#e0e0e0" opacity="0.68"/><circle cx="1787" cy="940" r="0.9" fill="#e0e0e0" opacity="0.70"/><circle cx="1164" cy="984" r="0.6" fill="#e0e0e0" opacity="0.45"/><circle cx="1749" cy="367" r="0.7" fill="#e0e0e0" opacity="0.40"/><circle cx="351" cy="722" r="0.6" fill="#e0e0e0" opacity="0.52"/><circle cx="1499" cy="466" r="0.6" fill="#e0e0e0" opacity="0.41"/><circle cx="1655" cy="628" r="0.9" fill="#e0e0e0" opacity="0.30"/><circle cx="1727" cy="394" r="0.5" fill="#e0e0e0" opacity="0.21"/><circle cx="1864" cy="701" r="0.5" fill="#e0e0e0" opacity="0.64"/><circle cx="751" cy="248" r="0.5" fill="#e0e0e0" opacity="0.37"/><circle cx="1113" cy="583" r="397" fill="url(#glow)"/><g clip-path="url(#gc)"><circle cx="1113" cy="583" r="387" fill="url(#ocean)"/><path d="M864.8 825.0 L912.5 836.9 L963.2 860.8 L1004.9 875.7 L1046.6 884.6 L1117.9 896.5 L1117.9 938.3 L1016.8 932.3 L927.4 896.5 L867.8 860.8Z" fill="#3358cc" opacity="0.8" filter="url(#bl4)"/><path d="M1100.0 905.5 L1189.4 908.5 L1225.2 914.4 L1189.4 938.3 L1100.0 938.3Z" fill="#3358cc" opacity="0.6" filter="url(#bl4)"/><path d="M1213.3 676.0 L1314.6 676.0 L1320.6 759.4 L1308.6 807.1 L1278.8 825.0 L1261.0 819.0 L1243.1 768.4 L1225.2 744.5 L1216.2 705.8Z" fill="#2a4ab8" opacity="0.9" filter="url(#bl2)"/><path d="M1314.6 670.0 L1379.9 670.0 L1379.9 819.0 L1344.4 825.0 L1308.6 807.1 L1320.6 759.4Z" fill="#3458cc" opacity="0.7" filter="url(#bl4)"/><path d="M1377 470 Q1430 560 1460 640 L1480 700 L1420 760 L1377 760Z" fill="#3152c4" opacity="0.55" filter="url(#bl4)"/><path d="M1377 300 L1440 330 L1420 420 L1377 440Z" fill="#4a88ee" opacity="0.6" filter="url(#bl4)"/><path d="M960.2 804.1 L969.1 804.1 L972.1 938.3 L963.2 938.3Z" fill="#6aa8f4" opacity="0.5" filter="url(#bl4)"/><path d="M850 760 Q858 800 860 840" stroke="#b8e4fa" stroke-width="4" opacity="0.6" fill="none" filter="url(#bl2)"/><path d="M844.0 670.0 L858.9 670.0 L867.8 720.7 L882.7 768.4 L900.6 789.2 L909.5 783.3 L900.6 744.5 L915.5 723.7 L939.3 705.8 L978.1 687.9 L1004.9 693.8 L1022.8 759.4 L1028.8 810.1 L1046.6 836.9 L1117.9 836.9 L1117.9 699.8 L1085.4 714.7 L1082.4 759.4 L1064.5 807.1 L1040.7 795.2 L1028.8 741.5 L1004.9 738.6 L993.0 714.7 L987.0 693.8 L975.1 681.9 L936.4 696.8 L897.6 720.7 L882.7 762.4 L867.8 729.6 L855.9 676.0Z" fill="#e4fafe" filter="url(#bl)"/><path d="M1028.8 741.5 L1117.9 699.8 L1117.9 908.5 L1088.4 896.5 L1046.6 860.8 L1028.8 819.0Z" fill="#c4f2fb" filter="url(#bl)"/><path d="M981.1 759.4 L993.0 756.4 L1004.9 795.2 L1016.8 819.0 L1040.7 848.8 L1088.4 890.6 L1085.4 896.5 L1037.7 854.8 L1010.9 825.0 L993.0 798.2Z" fill="#b4eefa" opacity="0.8" filter="url(#bl2)"/><path d="M987.0 825.0 L1004.9 848.8 L1034.7 875.7 L1076.5 902.5 L1117.9 914.4 L1117.9 905.5 L1082.4 893.5 L1043.7 863.7 L1013.9 836.9 L993.0 813.1Z" fill="#86d0f6" opacity="0.7" filter="url(#bl4)"/><path d="M993.0 759.4 L1016.8 759.4 L1025.8 789.2 L1022.8 813.1 L1010.9 819.0 L999.0 795.2Z" fill="#3f7eec" filter="url(#bl4)"/><path d="M1100.0 670.0 L1201.3 670.0 L1198.4 705.8 L1177.5 729.6 L1117.9 744.5 L1100.0 741.5Z" fill="#e4fafe" filter="url(#bl)"/><path d="M1100.0 789.2 L1117.9 801.1 L1177.5 831.0 L1225.2 836.9 L1240.1 878.6 L1266.9 896.5 L1249.0 902.5 L1159.6 905.5 L1100.0 902.5Z" fill="#d0f5fc" filter="url(#bl)"/><path d="M1117.9 744.5 L1189.4 711.7 L1198.4 759.4 L1198.4 801.1 L1177.5 831.0 L1135.8 825.0 L1117.9 801.1Z" fill="#4a8af0" filter="url(#bl2)"/><path d="M1153.7 795.2 L1177.5 783.3 L1189.4 801.1 L1171.5 813.1Z" fill="#7cb8f6" opacity="0.7" filter="url(#bl2)"/><path d="M1266.9 848.8 L1308.6 836.9 L1368.3 831.0 L1386.1 836.9 L1368.3 860.8 L1353.4 878.6 L1314.6 890.6 L1278.8 896.5 L1261.0 878.6Z" fill="#e4fafe" filter="url(#bl)"/><path d="M1213.3 860.8 L1278.8 854.8 L1284.8 878.6 L1237.1 884.6Z" fill="#3a5ed0" opacity="0.8" filter="url(#bl2)"/><path d="M852.9 670.0 L987.0 670.0 L987.0 699.8 L981.1 693.8 L975.1 687.9 L957.2 693.8 L936.4 702.8 L915.5 717.7 L897.6 726.6 L897.6 741.5 L890.2 759.4 L881.2 765.4 L876.7 759.4 L864.8 723.7 L857.4 676.0Z" fill="#8a8486"/><path d="M861.8 676.0 L897.6 676.0 L885.7 711.7 L870.8 717.7Z" fill="#9a8a8e" opacity="0.5" filter="url(#bl2)"/><path d="M894.6 768.4 L902.1 766.9 L906.6 783.3 L902.1 789.2 L896.1 784.8Z" fill="#5a7068"/><path d="M981.1 670.0 L1117.9 670.0 L1117.9 708.7 L1100.3 717.7 L1091.4 729.6 L1100.3 747.5 L1115.2 783.3 L1106.3 801.1 L1082.4 807.1 L1070.5 795.2 L1046.6 783.3 L1040.7 795.2 L1034.7 807.1 L1046.6 831.0 L1064.5 848.8 L1070.5 853.3 L1061.5 851.8 L1040.7 831.0 L1030.3 810.1 L1028.8 759.4 L1004.9 741.5 L999.0 738.6 L993.0 714.7 L987.0 699.8Z" fill="#5f7f70"/><path d="M1034.7 744.5 L1076.5 735.6 L1106.3 759.4 L1100.3 789.2 L1073.5 795.2 L1046.6 777.3Z" fill="#8a8684" opacity="0.75" filter="url(#bl2)"/><path d="M999.0 696.8 L1016.8 693.8 L1016.8 741.5 L1004.9 738.6Z" fill="#8c8888" opacity="0.6" filter="url(#bl2)"/><path d="M1004.9 823.5 L1016.8 826.5 L1046.6 848.8 L1076.5 872.7 L1089.9 890.6 L1082.4 894.1 L1046.6 872.7 L1022.8 848.8 L1007.9 831.0Z" fill="#5f7f70"/><path d="M1100.0 670.0 L1189.4 670.0 L1186.4 678.9 L1174.5 696.8 L1150.7 708.7 L1123.8 714.7 L1114.9 723.7 L1100.0 720.7Z" fill="#5f7f70"/><path d="M1111.9 729.6 L1129.8 728.1 L1129.8 740.0 L1116.4 743.0Z" fill="#5f7f70"/><path d="M1100.0 753.5 L1114.9 765.4 L1111.9 795.2 L1100.0 798.2Z" fill="#5f7f70"/><path d="M1201.3 686.4 L1210.9 681.9 L1208.8 702.8 L1202.8 704.3Z" fill="#5f7f70"/><path d="M1202.8 735.6 L1216.2 734.1 L1219.8 747.5 L1213.3 768.4 L1204.3 762.4Z" fill="#5f7f70"/><path d="M1219.2 765.4 L1237.1 768.4 L1252.0 795.2 L1246.1 816.1 L1228.2 810.1 L1222.2 789.2Z" fill="#5f7f70"/><path d="M1114.9 856.3 L1132.8 848.8 L1159.6 836.9 L1177.5 822.0 L1190.9 826.5 L1186.4 848.8 L1174.5 860.8 L1168.6 880.1 L1153.7 882.2 L1129.8 878.6 L1117.9 868.2Z" fill="#5f7f70"/><path d="M1192.4 868.2 L1207.3 860.8 L1220.7 865.2 L1213.3 875.7 L1201.3 886.1 L1194.8 878.6Z" fill="#5f7f70"/><path d="M1100.0 897.1 L1159.6 901.9 L1243.1 896.5 L1243.7 900.1 L1159.6 906.1 L1100.0 901.9Z" fill="#5f7f70"/><path d="M1284.8 844.4 L1308.6 839.9 L1332.5 831.0 L1368.3 824.4 L1384.6 832.4 L1368.3 844.4 L1338.5 860.8 L1308.6 854.8Z" fill="#5f7f70"/><path d="M1082.4 890.6 L1117.9 899.5 L1117.9 904.0 L1094.3 901.0Z" fill="#5f7f70"/><path d="M1144.7 959.1 L1189.4 938.3 L1234.1 920.4 L1266.9 898.0 L1308.6 890.6 L1338.5 872.7 L1350.4 875.7 L1362.3 896.5 L1398.1 938.3 L1457.7 997.9 L1144.7 997.9Z" fill="#c4a398"/><path d="M1189.4 938.3 L1234.1 920.4 L1266.9 898.0 L1308.6 890.6 L1338.5 872.7 L1350.4 875.7 L1359.3 890.6 L1338.5 902.5 L1278.8 917.4 L1219.2 938.3Z" fill="#98a49c" opacity="0.85" filter="url(#bl2)"/><path d="M760 480 L838 478 L838 625 L828 640 L812 625 L790 560Z" fill="#b6b4c8"/><path d="M790 335 L838 318 L838 372 L812 390 L795 380Z" fill="#7aa6a6"/><path d="M790 390 L838 380 L838 470 L812 478 L800 440Z" fill="#708a8a"/><path d="M810 440 L838 420 L838 495 L812 500Z" fill="#8ae0e4"/><path d="M808 372 L832 364 L838 395 L812 402Z" fill="#eaf4ff" opacity="0.8" filter="url(#bl2)"/><path d="M812 640 L838 600 L838 660 L820 680Z" fill="#d6f4fc" opacity="0.8" filter="url(#bl)"/><path d="M790 770 Q805 800 825 840" stroke="#d8f8ff" stroke-width="2.5" fill="none" filter="url(#bl)"/><rect x="726" y="196" width="774" height="774" filter="url(#tex)" opacity="0.2"/><rect x="726" y="196" width="774" height="774" filter="url(#tex2)" opacity="0.25"/><circle cx="1113" cy="583" r="385" fill="none" stroke="#8cd0ff" stroke-width="3" opacity="0.5" filter="url(#bl)"/></g><circle cx="1113" cy="583" r="387.3" fill="none" stroke="#ece8de" stroke-width="2.6"/><circle cx="1113" cy="583" r="391.5" fill="none" stroke="#3a6cc8" stroke-width="5" opacity="0.8" filter="url(#bl2)"/></g></svg><!-- /globe -->

<!-- viewport status text -->
<div class="t" style="left:321px;top:995px;color:#fff;font-size:10.5px;font-weight:bold;letter-spacing:0.75px;line-height:14px">东经 60° 40′ 57.73″ 北纬 27° 45′ 49.72″&nbsp;&nbsp; 高程 0.00米</div>
<div class="t" style="left:1673px;top:995px;color:#fff;font-size:10.5px;font-weight:bold;letter-spacing:0.85px;line-height:14px">帧率 71.36&nbsp; 层级 3&nbsp; 距地面 20732473.52 米</div>
<!-- logo -->
<div class="t" style="left:1744px;top:932px;color:#fff;font-size:29px;font-weight:bold;line-height:34px;letter-spacing:1.3px">图新说</div>
<svg style="left:1690px;top:940px" width="200" height="20" viewBox="0 0 200 20">
<path d="M1 9.5 H31 M168 9.5 H199" stroke="#bbb" stroke-width="1"/>
<path d="M35 5.5 L39 9.5 L35 13.5 L31 9.5Z" fill="#fff"/>
<path d="M44 4 L49.5 9.5 L44 15 L38.5 9.5Z" fill="none" stroke="#fff" stroke-width="1.2"/>
<path d="M164 5.5 L168 9.5 L164 13.5 L160 9.5Z" fill="#fff"/>
<path d="M155 4 L160.5 9.5 L155 15 L149.5 9.5Z" fill="none" stroke="#fff" stroke-width="1.2"/>
</svg>
<div class="t" style="left:1689px;top:970px;color:#d0d0d0;font-size:13.5px;line-height:16px;letter-spacing:0.4px">中科图新（苏州）科技有限公司</div>
<!-- compass -->
<svg style="left:1760px;top:200px" width="120" height="120" viewBox="0 0 120 120">
<path d="M10 50.5 A51 51 0 0 1 49 10" stroke="#333" stroke-width="1.6" fill="none"/>
<path d="M110 69.5 A51 51 0 0 1 71 110" stroke="#333" stroke-width="1.6" fill="none"/>
<circle cx="60" cy="60" r="36" fill="none" stroke="#2b2b2b" stroke-width="8"/>
<circle cx="60" cy="60" r="32" fill="none" stroke="#3a3a3a" stroke-width="0.8"/>
<path d="M60 20 V28 M20 60 H28 M92 60 H100 M60 92 V100" stroke="#000" stroke-width="2"/>
<rect x="52" y="23" width="16" height="11" rx="4" fill="#0a0a0a" stroke="#3e3e3e" stroke-width="1.2"/>
<text x="60" y="32" font-size="9" fill="#4a4a4a" text-anchor="middle" font-family="Liberation Sans">N</text>
<circle cx="60" cy="7.5" r="7.5" fill="#2b2b2b"/>
<circle cx="9.5" cy="60" r="7.5" fill="#2b2b2b"/>
<circle cx="111" cy="60" r="7.5" fill="#2b2b2b"/>
<circle cx="60" cy="111" r="7.5" fill="#2b2b2b"/>
<path d="M60 3.5 L56 7.5 H58.5 V11.5 H61.5 V7.5 H64Z" fill="none" stroke="#444" stroke-width="1"/>
<path d="M9.5 64.5 L5.5 60.5 H8 V56 H11 V60.5 H13.5Z" fill="none" stroke="#444" stroke-width="1"/>
<path d="M107 60 H115 M111 56 V64" stroke="#444" stroke-width="1.6"/>
<path d="M56 111 H64" stroke="#444" stroke-width="1.8"/>
<path d="M60 39 L52 48 H68Z M60 81 L52 72 H68Z M39 60 L48 52 V68Z M81 60 L72 52 V68Z" fill="#2e2e2e"/>
<path d="M60 46 V74 M46 60 H74" stroke="#2e2e2e" stroke-width="1.4"/>
<circle cx="60" cy="60" r="4" fill="#333"/>
<circle cx="23.5" cy="33" r="2.5" fill="#2a6a90" opacity="0.6"/>
<circle cx="96.5" cy="87" r="2.5" fill="#2a6a90" opacity="0.6"/>
</svg>
<!-- bottom toolbar -->
<div class="t" style="left:820px;top:1021px;color:#222">地表不透明度</div>
<div class="a" style="left:898px;top:1019px;width:80px;height:2px;background:repeating-linear-gradient(90deg,#9a9a9a 0 1px,transparent 1px 2px)"></div>
<div class="a" style="left:898px;top:1030px;width:80px;height:2px;background:#3d5a8a"></div>
<div class="a" style="left:976px;top:1024px;width:5px;height:13px;background:#2b4574"></div>
<div class="a" style="left:990px;top:1015px;width:1px;height:23px;background:#a8a8a8"></div>
<div class="a" style="left:1381px;top:1015px;width:1px;height:23px;background:#a8a8a8"></div>
<div class="a" style="left:1552px;top:1015px;width:1px;height:23px;background:#a8a8a8"></div>
<div class="t" style="left:1017px;top:1021px;color:#222">距离测量</div>
<div class="t" style="left:1094px;top:1021px;color:#222">高度测量</div>
<div class="t" style="left:1171px;top:1021px;color:#222">面积测量</div>
<div class="t" style="left:1249px;top:1021px;color:#222">三角测量</div>
<div class="t" style="left:1326px;top:1021px;color:#222">清除测量</div>
<div class="t" style="left:1408px;top:1021px;color:#222">实时等高线</div>
<div class="t" style="left:1497px;top:1021px;color:#222">坡度分析</div>
<div class="t" style="left:1579px;top:1021px;color:#222">项目视角</div>
<div class="t" style="left:1656px;top:1021px;color:#222">正北+垂直视角</div>
<div class="t" style="left:1765px;top:1021px;color:#222">锁定垂直视角</div>
<div class="t" style="left:1866px;top:1021px;color:#222">地下视角</div>
<svg style="left:998px;top:1020px" width="14" height="14" viewBox="0 0 14 14"><path d="M1 11.5 H13" stroke="#3c6fc4" stroke-width="1.5"/><rect x="2" y="3" width="10" height="5" fill="none" stroke="#3c6fc4" stroke-width="1.2"/><path d="M4 5.5 H10" stroke="#3c6fc4" stroke-width="1" stroke-dasharray="1 1"/></svg>
<svg style="left:1075px;top:1020px" width="14" height="14" viewBox="0 0 14 14"><path d="M1.5 1 V13" stroke="#3c6fc4" stroke-width="1.3"/><rect x="4" y="4.5" width="9" height="5" fill="none" stroke="#3c6fc4" stroke-width="1.2"/><path d="M6 7 H11" stroke="#3c6fc4" stroke-width="1" stroke-dasharray="1 1"/></svg>
<svg style="left:1153px;top:1020px" width="14" height="14" viewBox="0 0 14 14"><path d="M7 1 L13 4 V10 L7 13 L1 10 V4Z" fill="#fff" stroke="#555" stroke-width="1.1"/><path d="M1 4 L7 7 L13 4 M7 7 V13" stroke="#555" stroke-width="1" fill="none"/><path d="M1.5 4 L7 1.3 L12.5 4 L7 6.7Z" fill="#3c6fc4"/></svg>
<svg style="left:1229px;top:1020px" width="14" height="14" viewBox="0 0 14 14"><path d="M2 1 V13 H13Z" fill="none" stroke="#555" stroke-width="1.1"/><path d="M4.5 8 V10.5 H8" fill="none" stroke="#3c6fc4" stroke-width="1.1"/></svg>
<svg style="left:1307px;top:1019px" width="12" height="15" viewBox="0 0 12 15"><path d="M1 3 H11 M4 3 V1.5 H8 V3 M2 3 L2.5 14 H9.5 L10 3 M4.5 5.5 V12 M7.5 5.5 V12" fill="none" stroke="#666" stroke-width="1.1"/></svg>
<svg style="left:1388px;top:1020px" width="15" height="15" viewBox="0 0 15 15"><circle cx="7.5" cy="7.5" r="6.5" fill="none" stroke="#3c6fc4" stroke-width="1.1"/><circle cx="7.5" cy="7.5" r="4" fill="none" stroke="#3c6fc4" stroke-width="1.1"/><circle cx="7.5" cy="7.5" r="1.6" fill="none" stroke="#3c6fc4" stroke-width="1.1"/></svg>
<svg style="left:1476px;top:1019px" width="17" height="15" viewBox="0 0 17 15"><path d="M1 13 L5 5 L8 9 L11 3 L16 13" fill="none" stroke="#555" stroke-width="1.1"/><path d="M6 13 L11 8 M9 13 L13 9" stroke="#3c6fc4" stroke-width="1"/><path d="M12 1 L14 4" stroke="#3c6fc4" stroke-width="1"/></svg>
<svg style="left:1559px;top:1020px" width="16" height="15" viewBox="0 0 16 15"><circle cx="8" cy="7.5" r="6.5" fill="none" stroke="#3c6fc4" stroke-width="1.2"/><ellipse cx="8" cy="7.5" rx="3" ry="6.5" fill="none" stroke="#3c6fc4" stroke-width="1.1"/><path d="M1.5 7.5 H14.5" stroke="#555" stroke-width="1.2"/></svg>
<svg style="left:1636px;top:1019px" width="14" height="16" viewBox="0 0 14 16"><path d="M3 2 H11 M7 2 V6" stroke="#3c6fc4" stroke-width="1.3"/><circle cx="7" cy="7" r="1.5" fill="none" stroke="#3c6fc4" stroke-width="1.1"/><path d="M5 9 L2 14 H12 L9 9" fill="none" stroke="#555" stroke-width="1.1"/></svg>
<svg style="left:1746px;top:1019px" width="16" height="16" viewBox="0 0 16 16"><path d="M3 2 H11 M7 2 V6" stroke="#3c6fc4" stroke-width="1.3"/><circle cx="7" cy="7" r="1.5" fill="none" stroke="#3c6fc4" stroke-width="1.1"/><path d="M5 9 L2 14 H9" fill="none" stroke="#555" stroke-width="1.1"/><rect x="10" y="10" width="5" height="4.5" fill="#3c6fc4"/><path d="M11 10 V8.5 Q12.5 7 14 8.5 V10" fill="none" stroke="#3c6fc4" stroke-width="1"/></svg>
<svg style="left:1847px;top:1019px" width="15" height="16" viewBox="0 0 15 16"><path d="M1 2 H14 M1 5 H14" stroke="#777" stroke-width="1" stroke-dasharray="1.5 1"/><path d="M4 8 L7 11 L4 14 M8 8 L11 11 L8 14" fill="none" stroke="#3c6fc4" stroke-width="1.1"/></svg>

<!-- dialog 1 -->
<div class="a" style="left:330px;top:180px;width:480px;height:579px;background:#f0f0f0;border:1px solid #dadada"></div>

<!-- dialog 1 content -->
<div class="t" style="left:346px;top:190px;color:#444">地形批处理</div>
<svg style="left:781px;top:191px" width="11" height="11"><path d="M0.5 0.5 L10.5 10.5 M10.5 0.5 L0.5 10.5" stroke="#555" stroke-width="1.1"/></svg>
<!-- group 文件信息 -->
<div class="a" style="left:346px;top:223px;width:448px;height:254px;border:1px solid #d0d0d0"></div>
<div class="a" style="left:355px;top:217px;width:58px;height:12px;background:#f0f0f0"></div>
<div class="t" style="left:362px;top:217px;color:#444">文件信息</div>
<div class="a btn" style="left:361px;top:240px;width:76px;height:25px"></div>
<div class="a btn" style="left:446px;top:240px;width:76px;height:25px"></div>
<div class="a btn" style="left:531px;top:240px;width:76px;height:25px"></div>
<div class="a btn" style="left:616px;top:240px;width:76px;height:25px"></div>
<div class="t c" style="left:361px;top:246px;width:76px;color:#333">添加数据</div>
<div class="t c" style="left:446px;top:246px;width:76px;color:#333">添加目录</div>
<div class="t c" style="left:531px;top:246px;width:76px;color:#333">移除选中</div>
<div class="t c" style="left:616px;top:246px;width:76px;color:#333">移除全部</div>
<!-- grid -->
<div class="a" style="left:362px;top:274px;width:414px;height:183px;border:1px solid #e4e4e4;background:#f2f2f2"></div>
<div class="a" style="left:362px;top:298px;width:414px;height:1px;background:#dcdcdc"></div>
<div class="a" style="left:402px;top:274px;width:1px;height:24px;background:#e0e0e0"></div>
<div class="a" style="left:546px;top:274px;width:1px;height:46px;background:#e4e4e4"></div>
<div class="a" style="left:692px;top:274px;width:1px;height:46px;background:#e4e4e4"></div>
<div class="a" style="left:403px;top:299px;width:143px;height:21px;background:#e8e8e8"></div>
<div class="a" style="left:403px;top:320px;width:290px;height:1px;background:#e6e6e6"></div>
<svg style="left:371px;top:306px" width="5" height="8"><path d="M0.5 0 L4.5 4 L0.5 8Z" fill="#c8c8c8"/></svg>
<div class="t" style="left:405px;top:280px;color:#c4c4c4">源数据路径</div>
<div class="t" style="left:550px;top:280px;color:#c4c4c4">目标数据路径</div>
<div class="t" style="left:405px;top:303px;color:#bdbdbd">D:\图新地球技术支持\2...</div>
<div class="t" style="left:550px;top:303px;color:#bdbdbd">D:\图新地球技术支持\2...</div>
<!-- group 转换设置 -->
<div class="a" style="left:346px;top:501px;width:448px;height:48px;border:1px solid #d0d0d0"></div>
<div class="a" style="left:355px;top:495px;width:58px;height:12px;background:#f0f0f0"></div>
<div class="t" style="left:362px;top:495px;color:#444">转换设置</div>
<div class="a" style="left:369px;top:521px;width:14px;height:14px;background:#fff;border:1px solid #777"></div>
<div class="t" style="left:386px;top:521px;color:#444">启用无效值过滤</div>
<div class="a" style="left:500px;top:516px;width:76px;height:24px;background:#f0f0f0;border:1px solid #cfcfcf"></div>
<div class="t" style="left:504px;top:521px;color:#777">-9999</div>
<!-- 工程坐标系转换 -->
<div class="a" style="left:347px;top:567px;width:14px;height:14px;background:#fff;border:1px solid #c4c4c4"></div>
<svg style="left:349px;top:569px" width="10" height="10"><path d="M1 5 L4 8 L9 2" stroke="#bbb" stroke-width="1.2" fill="none"/></svg>
<div class="t" style="left:365px;top:567px;color:#444">工程坐标系转换</div>
<svg style="left:462px;top:567px" width="14" height="14" viewBox="0 0 14 14"><circle cx="7" cy="7" r="5.8" fill="none" stroke="#aaa" stroke-width="1"/><path d="M5.2 5.4 Q5.2 3.6 7 3.6 Q8.8 3.6 8.8 5.2 Q8.8 6.3 7.4 6.9 Q7 7.2 7 8.3" fill="none" stroke="#aaa" stroke-width="1"/><circle cx="7" cy="10.2" r="0.7" fill="#aaa"/></svg>
<div class="a btn" style="left:511px;top:561px;width:86px;height:25px"></div>
<div class="t c" style="left:511px;top:567px;width:86px;color:#333">坐标系配置</div>
<!-- text area -->
<div class="a" style="left:346px;top:591px;width:448px;height:113px;background:#fff;border:1px solid #111"></div>
<div class="t" style="left:349px;top:593px;color:#444">若数据采用工程坐标系生成，请勾选“工程坐标系转换”后配置</div>
<div class="a" style="left:777px;top:593px;width:15px;height:109px;background:#f4f4f4"></div>
<div class="a" style="left:778px;top:594px;width:13px;height:14px;background:#fff;border:1px solid #e6e6e6"></div>
<div class="a" style="left:778px;top:687px;width:13px;height:14px;background:#fff;border:1px solid #e6e6e6"></div>
<svg style="left:781px;top:599px" width="7" height="4"><path d="M0 4 L3.5 0 L7 4Z" fill="#bbb"/></svg>
<svg style="left:781px;top:693px" width="7" height="4"><path d="M0 0 L3.5 4 L7 0Z" fill="#bbb"/></svg>
<div class="a btn" style="left:656px;top:718px;width:56px;height:24px"></div>
<div class="a btn" style="left:738px;top:718px;width:56px;height:24px"></div>
<div class="t c" style="left:656px;top:723px;width:56px;color:#444">取消</div>
<div class="t c" style="left:738px;top:723px;width:56px;color:#444">确定</div>

<!-- dialog 2 -->
<div class="a" style="left:837px;top:183px;width:540px;height:492px;background:#f0f0f0;border:1px solid #2b579a"></div>
<div class="a" style="left:837px;top:183px;width:540px;height:31px;background:#2b579a"></div>


<!-- dropdown menu -->
<div class="a" style="left:45px;top:138px;width:153px;height:42px;background:#fff;box-shadow:2px 2px 4px rgba(0,0,0,0.25)"></div>
<svg style="left:55px;top:147px" width="29" height="24" viewBox="0 0 29 24">
<path d="M1 22.5 L10 6 L16 16 L16 22.5Z" fill="#fff"/>
<path d="M9 22.5 L17 1.5 L27 22.5Z" fill="#fff"/>
<path d="M10 6 L14 13 L15 22.5 L12 22.5Z" fill="#3c7ddc"/>
<path d="M17 1.5 L27 22.5 L20 22.5Z" fill="#3c7ddc"/>
<path d="M1 22.5 L10 6 M9 22.5 L17 1.5 L27 22.5 M0 22.5 H28" fill="none" stroke="#555" stroke-width="1.6"/>
</svg>
<div class="t" style="left:96px;top:152px">地形批量导入</div>
<!-- red boxes (annotations) -->
<div class="a" style="left:42px;top:65px;width:50px;height:68px;border:3px solid #e3141e"></div>
<div class="a" style="left:44px;top:137px;width:154px;height:44px;border:3px solid #e3141e"></div>
<svg style="left:171px;top:153px" width="20" height="20" viewBox="0 0 20 20"><circle cx="10" cy="10" r="8.3" fill="none" stroke="#e3141e" stroke-width="1.8"/><text x="10" y="14.8" font-size="13" font-weight="bold" fill="#e3141e" text-anchor="middle" font-family="Liberation Sans">1</text></svg>


<!-- dialog 2 content -->
<div class="t" style="left:853px;top:193px;color:#fff">坐标系设置</div>
<svg style="left:1346px;top:193px" width="13" height="13"><path d="M0.5 0.5 L12.5 12.5 M12.5 0.5 L0.5 12.5" stroke="#fff" stroke-width="1.3"/></svg>
<!-- group 坐标系信息 -->
<div class="a" style="left:845px;top:228px;width:523px;height:173px;border:1px solid #d0d0d0"></div>
<div class="a" style="left:854px;top:222px;width:72px;height:12px;background:#f0f0f0"></div>
<div class="t" style="left:860px;top:222px;color:#333">坐标系信息</div>
<div class="t" style="left:869px;top:247px;color:#333">投影类型:</div>
<svg style="left:941px;top:250px" width="14" height="14"><circle cx="7" cy="7" r="6.2" fill="#fff" stroke="#333" stroke-width="1"/><circle cx="7" cy="7" r="3.3" fill="#333"/></svg>
<div class="t" style="left:958px;top:250px;color:#222">高斯克吕格(Gauss-Kruger)</div>
<svg style="left:1120px;top:250px" width="14" height="14"><circle cx="7" cy="7" r="6.2" fill="#fff" stroke="#333" stroke-width="1"/></svg>
<div class="t" style="left:1139px;top:250px;color:#222">UTM</div>
<div class="a" style="left:1261px;top:242px;width:25px;height:24px;background:#fff;border:1px dotted #222"></div>
<div class="a btn" style="left:1293px;top:242px;width:25px;height:24px;border-color:#ddd"></div>
<div class="a btn" style="left:1324px;top:242px;width:25px;height:24px;border-color:#ddd"></div>
<svg style="left:1264px;top:245px" width="19" height="18" viewBox="0 0 19 18"><path d="M13 4 Q10.5 1.5 7.5 1.5 Q2 1.5 2 8 Q2 14.5 7.5 14.5 Q10 14.5 12 12.5" fill="none" stroke="#3c7ddc" stroke-width="1.6"/><circle cx="11.5" cy="10.5" r="3" fill="none" stroke="#3c7ddc" stroke-width="1.3"/><path d="M13.5 12.5 L16.5 15.5" stroke="#3c7ddc" stroke-width="1.5"/><text x="13.5" y="7.5" font-size="7" font-weight="bold" fill="#2eb872" font-family="Liberation Sans">E</text></svg>
<svg style="left:1297px;top:245px" width="18" height="18" viewBox="0 0 18 18"><path d="M2 1 H10 L13 4 V16 H2Z" fill="#fff" stroke="#3c7ddc" stroke-width="1.4"/><path d="M4.5 5 H8 Q10 5 10 7 Q10 9 8 9 H5 V13" fill="none" stroke="#3c7ddc" stroke-width="1.4"/><path d="M12 9 L9.5 13 H12 L10.5 17 L15 11.5 H12.5 L14 9Z" fill="#f5b021"/></svg>
<svg style="left:1327px;top:245px" width="19" height="18" viewBox="0 0 19 18"><path d="M1 13 H17 M6 8 V17" stroke="#555" stroke-width="1.2"/><rect x="4" y="11" width="4" height="4" fill="#fff" stroke="#3c7ddc" stroke-width="1.2"/><path d="M12 10 V2 M9.5 4.5 L12 2 L14.5 4.5" fill="none" stroke="#3c7ddc" stroke-width="1.3"/></svg>
<div class="t" style="left:869px;top:284px;color:#333">椭球参数:</div>
<div class="a" style="left:940px;top:278px;width:409px;height:24px;background:#fff;border:1px solid #dadada"></div>
<div class="t" style="left:944px;top:283px;color:#222">国家2000</div>
<svg style="left:1336px;top:289px" width="8" height="4"><path d="M0 0 H8 L4 4Z" fill="#555"/></svg>
<div class="t" style="left:882px;top:326px;color:#333">坐标系:</div>
<div class="a" style="left:940px;top:319px;width:409px;height:24px;background:#fff;border:1px solid #dadada"></div>
<div class="t" style="left:944px;top:324px;color:#222">国家2000 高斯三度分带 中央经线120（坐标不含分带）</div>
<svg style="left:1336px;top:330px" width="8" height="4"><path d="M0 0 H8 L4 4Z" fill="#555"/></svg>
<div class="t" style="left:869px;top:366px;color:#333">中央经线:</div>
<div class="a" style="left:940px;top:362px;width:80px;height:24px;background:#fff;border:1px solid #dadada"></div>
<div class="t" style="left:944px;top:367px;color:#222">120</div>
<div class="t" style="left:1024px;top:366px;color:#333">度</div>
<div class="t" style="left:1055px;top:366px;color:#333">假东:</div>
<div class="a" style="left:1095px;top:362px;width:91px;height:24px;background:#fff;border:1px solid #dadada"></div>
<div class="t" style="left:1099px;top:367px;color:#222">500000</div>
<div class="t" style="left:1189px;top:366px;color:#333">米</div>
<div class="t" style="left:1223px;top:366px;color:#333">假北:</div>
<div class="a" style="left:1266px;top:362px;width:66px;height:24px;background:#fff;border:1px solid #dadada"></div>
<div class="t" style="left:1270px;top:367px;color:#222">0</div>
<div class="t" style="left:1336px;top:366px;color:#333">米</div>
<!-- group 转换参数信息 -->
<div class="a" style="left:845px;top:419px;width:523px;height:165px;border:1px solid #d0d0d0"></div>
<div class="a" style="left:854px;top:413px;width:84px;height:12px;background:#f0f0f0"></div>
<div class="t" style="left:860px;top:414px;color:#333">转换参数信息</div>
<div class="t" style="left:869px;top:435px;color:#333">转换参数:</div>
<div class="a" style="left:941px;top:435px;width:15px;height:15px;background:#fff;border:1px solid #555"></div>
<div class="t" style="left:960px;top:436px;color:#222">启用</div>
<div class="t" style="left:869px;top:466px;color:#333">参数类型:</div>
<svg style="left:943px;top:467px" width="14" height="14"><circle cx="7" cy="7" r="6.2" fill="#fff" stroke="#ddd" stroke-width="1"/><circle cx="7" cy="7" r="3" fill="#c8c8c8"/></svg>
<div class="t" style="left:961px;top:468px;color:#888">四参数</div>
<svg style="left:1018px;top:467px" width="14" height="14"><circle cx="7" cy="7" r="6.2" fill="#fff" stroke="#ddd" stroke-width="1"/></svg>
<div class="t" style="left:1036px;top:468px;color:#888">七参数</div>
<div class="a btn" style="left:1240px;top:461px;width:101px;height:21px;border-color:#d6d6d6"></div>
<div class="t c" style="left:1240px;top:465px;width:101px;color:#888">参数计算器</div>
<div class="t" style="left:872px;top:503px;color:#333">X平移:</div>
<div class="a" style="left:925px;top:500px;width:130px;height:24px;background:#f0f0f0;border:1px solid #d0d0d0"></div>
<div class="t" style="left:1058px;top:502px;color:#333">m(米)</div>
<div class="t" style="left:1121px;top:503px;color:#333">Y平移:</div>
<div class="a" style="left:1172px;top:500px;width:130px;height:24px;background:#f0f0f0;border:1px solid #d0d0d0"></div>
<div class="t" style="left:1305px;top:502px;color:#333">m(米)</div>
<div class="t" style="left:880px;top:538px;color:#333">旋转:</div>
<div class="a" style="left:925px;top:535px;width:130px;height:24px;background:#f0f0f0;border:1px solid #d0d0d0"></div>
<div class="t" style="left:1058px;top:537px;color:#333">rad(弧度)</div>
<div class="t" style="left:1128px;top:538px;color:#333">缩放:</div>
<div class="a" style="left:1172px;top:535px;width:130px;height:24px;background:#f0f0f0;border:1px solid #d0d0d0"></div>
<!-- bottom buttons -->
<div class="a btn" style="left:845px;top:594px;width:90px;height:24px;border-color:#dcdcdc"></div>
<div class="t c" style="left:845px;top:599px;width:90px;color:#222">导入配置</div>
<div class="a btn" style="left:943px;top:594px;width:90px;height:24px;border-color:#dcdcdc"></div>
<div class="t c" style="left:943px;top:599px;width:90px;color:#222">导出配置</div>
<div class="a" style="left:845px;top:629px;width:523px;height:1px;background:#cfcfcf"></div>
<div class="a btn" style="left:1231px;top:641px;width:56px;height:24px;border-color:#dcdcdc"></div>
<div class="t c" style="left:1231px;top:646px;width:56px;color:#222">取消</div>
<div class="a btn" style="left:1308px;top:641px;width:56px;height:24px;border-color:#dcdcdc"></div>
<div class="t c" style="left:1308px;top:646px;width:56px;color:#222">确定</div>


<!-- annotations -->
<div class="a" style="left:354px;top:234px;width:89px;height:35px;border:3px solid #e61b24"></div>
<div class="a" style="left:341px;top:558px;width:116px;height:32px;border:3px solid #e61b24"></div>
<div class="a" style="left:835px;top:213px;width:544px;height:377px;border:3px solid #e61b24"></div>
<svg style="left:0;top:0" width="1920" height="1040" viewBox="0 0 1920 1040"><path d="M220.0 184.6 L319.6 229.7" stroke="#e61b24" stroke-width="4" stroke-linecap="round"/><path d="M329.6 234.2 L311.9 234.4 L318.7 229.3 L318.1 220.8Z" fill="#e61b24"/><path d="M384.0 300.0 L384.0 524.5" stroke="#e61b24" stroke-width="4" stroke-linecap="round"/><path d="M384.0 535.5 L376.5 519.5 L384.0 523.5 L391.5 519.5Z" fill="#e61b24"/><path d="M506.8 567.2 L804.7 283.9" stroke="#e61b24" stroke-width="4" stroke-linecap="round"/><path d="M812.7 276.3 L806.3 292.8 L804.0 284.6 L795.9 281.9Z" fill="#e61b24"/><circle cx="342.9" cy="254.2" r="8.2" fill="none" stroke="#e61b24" stroke-width="1.6"/><text x="342.9" y="258.8" font-size="12.5" font-weight="bold" fill="#e61b24" text-anchor="middle" font-family="Liberation Sans">2</text><circle cx="342.9" cy="550" r="8.2" fill="none" stroke="#e61b24" stroke-width="1.6"/><text x="342.9" y="554.6" font-size="12.5" font-weight="bold" fill="#e61b24" text-anchor="middle" font-family="Liberation Sans">3</text><circle cx="849" cy="237" r="8.2" fill="none" stroke="#e61b24" stroke-width="1.6"/><text x="849" y="241.6" font-size="12.5" font-weight="bold" fill="#e61b24" text-anchor="middle" font-family="Liberation Sans">4</text></svg>
</body></html>
